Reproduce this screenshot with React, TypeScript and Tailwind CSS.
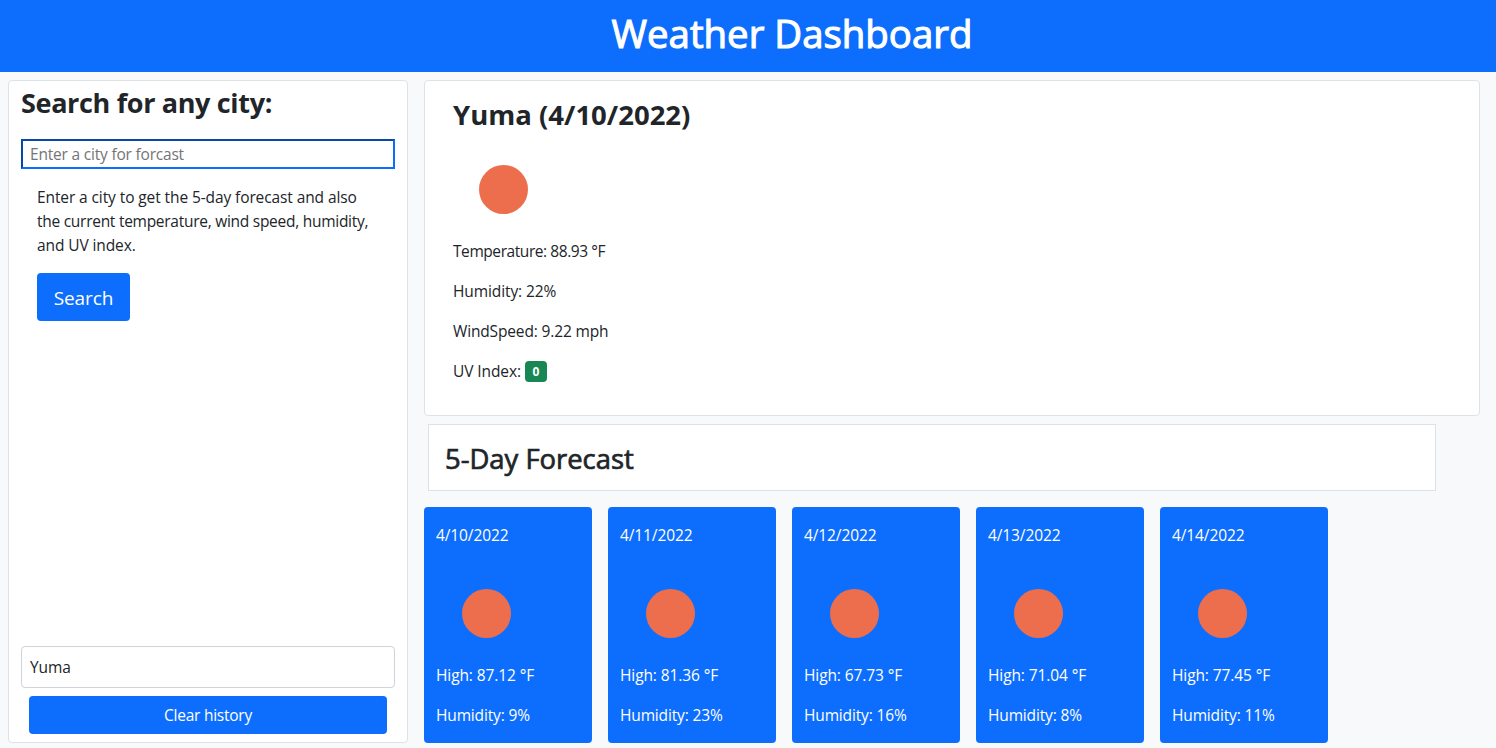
const days = [
  { date: '4/10/2022', high: '87.12', humidity: 9 },
  { date: '4/11/2022', high: '81.36', humidity: 23 },
  { date: '4/12/2022', high: '67.73', humidity: 16 },
  { date: '4/13/2022', high: '71.04', humidity: 8 },
  { date: '4/14/2022', high: '77.45', humidity: 11 },
];

function Sun() {
  return (
    <svg width="100" height="100" viewBox="0 0 100 100" className="block">
      <circle cx="50.5" cy="50.5" r="24.5" fill="#ec6e4c" />
    </svg>
  );
}

export default function App() {
  return (
    <div className="h-[748px] overflow-hidden bg-[#f8f9fa] font-['Open_Sans','Noto_Sans',sans-serif] text-[15.5px] leading-6 tracking-[-0.1px] text-[#212529]">
      <header className="flex h-[72px] justify-center bg-[#0d6efd] pl-[88px]">
        <h1 className="mt-[9px] whitespace-nowrap text-[38.4px] font-normal leading-12 tracking-normal text-white [-webkit-text-stroke:1.1px_white]">Weather Dashboard</h1>
      </header>
      <div className="flex">
        <aside className="m-2 flex h-[663px] w-[400px] flex-col rounded border border-[#dee2e6] bg-white px-3">
          <h2 className="mt-[5px] text-[27px] font-bold leading-[34px] tracking-[-0.34px]">Search for any city:</h2>
          <input className="mt-[19px] h-[30px] w-full border-2 border-b-[#0d6efd] border-l-[#0a48a6] border-r-[#0d6efd] border-t-[#0a48a6] px-[7px] tracking-[-0.2px] outline-none placeholder:text-[#757575]" placeholder="Enter a city for forcast" />
          <p className="mt-4 pl-4 pr-2">
            Enter a city to get the 5-day forecast and also
            <br />
            <span className="tracking-[-0.27px]">the current temperature, wind speed, humidity,</span>
            <br />
            and UV index.
          </p>
          <button className="ml-4 mt-4 h-12 w-[93px] rounded bg-[#0d6efd] pt-0.5 text-[19px] tracking-[-0.1px] text-white">Search</button>
          <div className="mt-auto flex h-[42px] items-center rounded border border-[#ced4da] px-2">Yuma</div>
          <button className="mx-2 mb-2 mt-2 h-[38px] shrink-0 rounded bg-[#0d6efd] tracking-[-0.25px] text-white">Clear history</button>
        </aside>
        <main className="ml-2 mt-2">
          <section className="h-[336px] w-[1056px] rounded border border-[#dee2e6] bg-white px-7 pt-[17px]">
            <h2 className="text-[27.5px] font-bold leading-[34px] tracking-normal">Yuma (4/10/2022)</h2>
            <div className="mt-[7px]"><Sun /></div>
            <p className="tracking-[-0.43px]">Temperature: 88.93 °F</p>
            <p className="mt-4">Humidity: 22%</p>
            <p className="mt-4 tracking-[-0.15px]">WindSpeed: 9.22 mph</p>
            <p className="mt-4 flex items-center gap-1">UV Index: <span className="flex h-[21px] w-[22px] items-center justify-center rounded bg-[#198754] pt-0.5 text-xs font-bold tracking-normal text-white">0</span></p>
          </section>
          <div className="ml-1 mt-2 h-[67px] w-[1008px] border border-[#dee2e6] bg-white px-4 pt-[17px]">
            <h2 className="text-[27.4px] font-normal leading-[34px] tracking-normal [-webkit-text-stroke:0.7px_#212529]">5-Day Forecast</h2>
          </div>
          <div className="mt-4 flex gap-4">
            {days.map((d) => (
              <article key={d.date} className="h-[236px] w-[168px] rounded bg-[#0d6efd] px-3 pt-4 text-white">
                <p>{d.date}</p>
                <div className="mt-4"><Sun /></div>
                <p>High: {d.high} °F</p>
                <p className="mt-4 tracking-[-0.15px]">Humidity: {d.humidity}%</p>
              </article>
            ))}
          </div>
        </main>
      </div>
    </div>
  );
}
